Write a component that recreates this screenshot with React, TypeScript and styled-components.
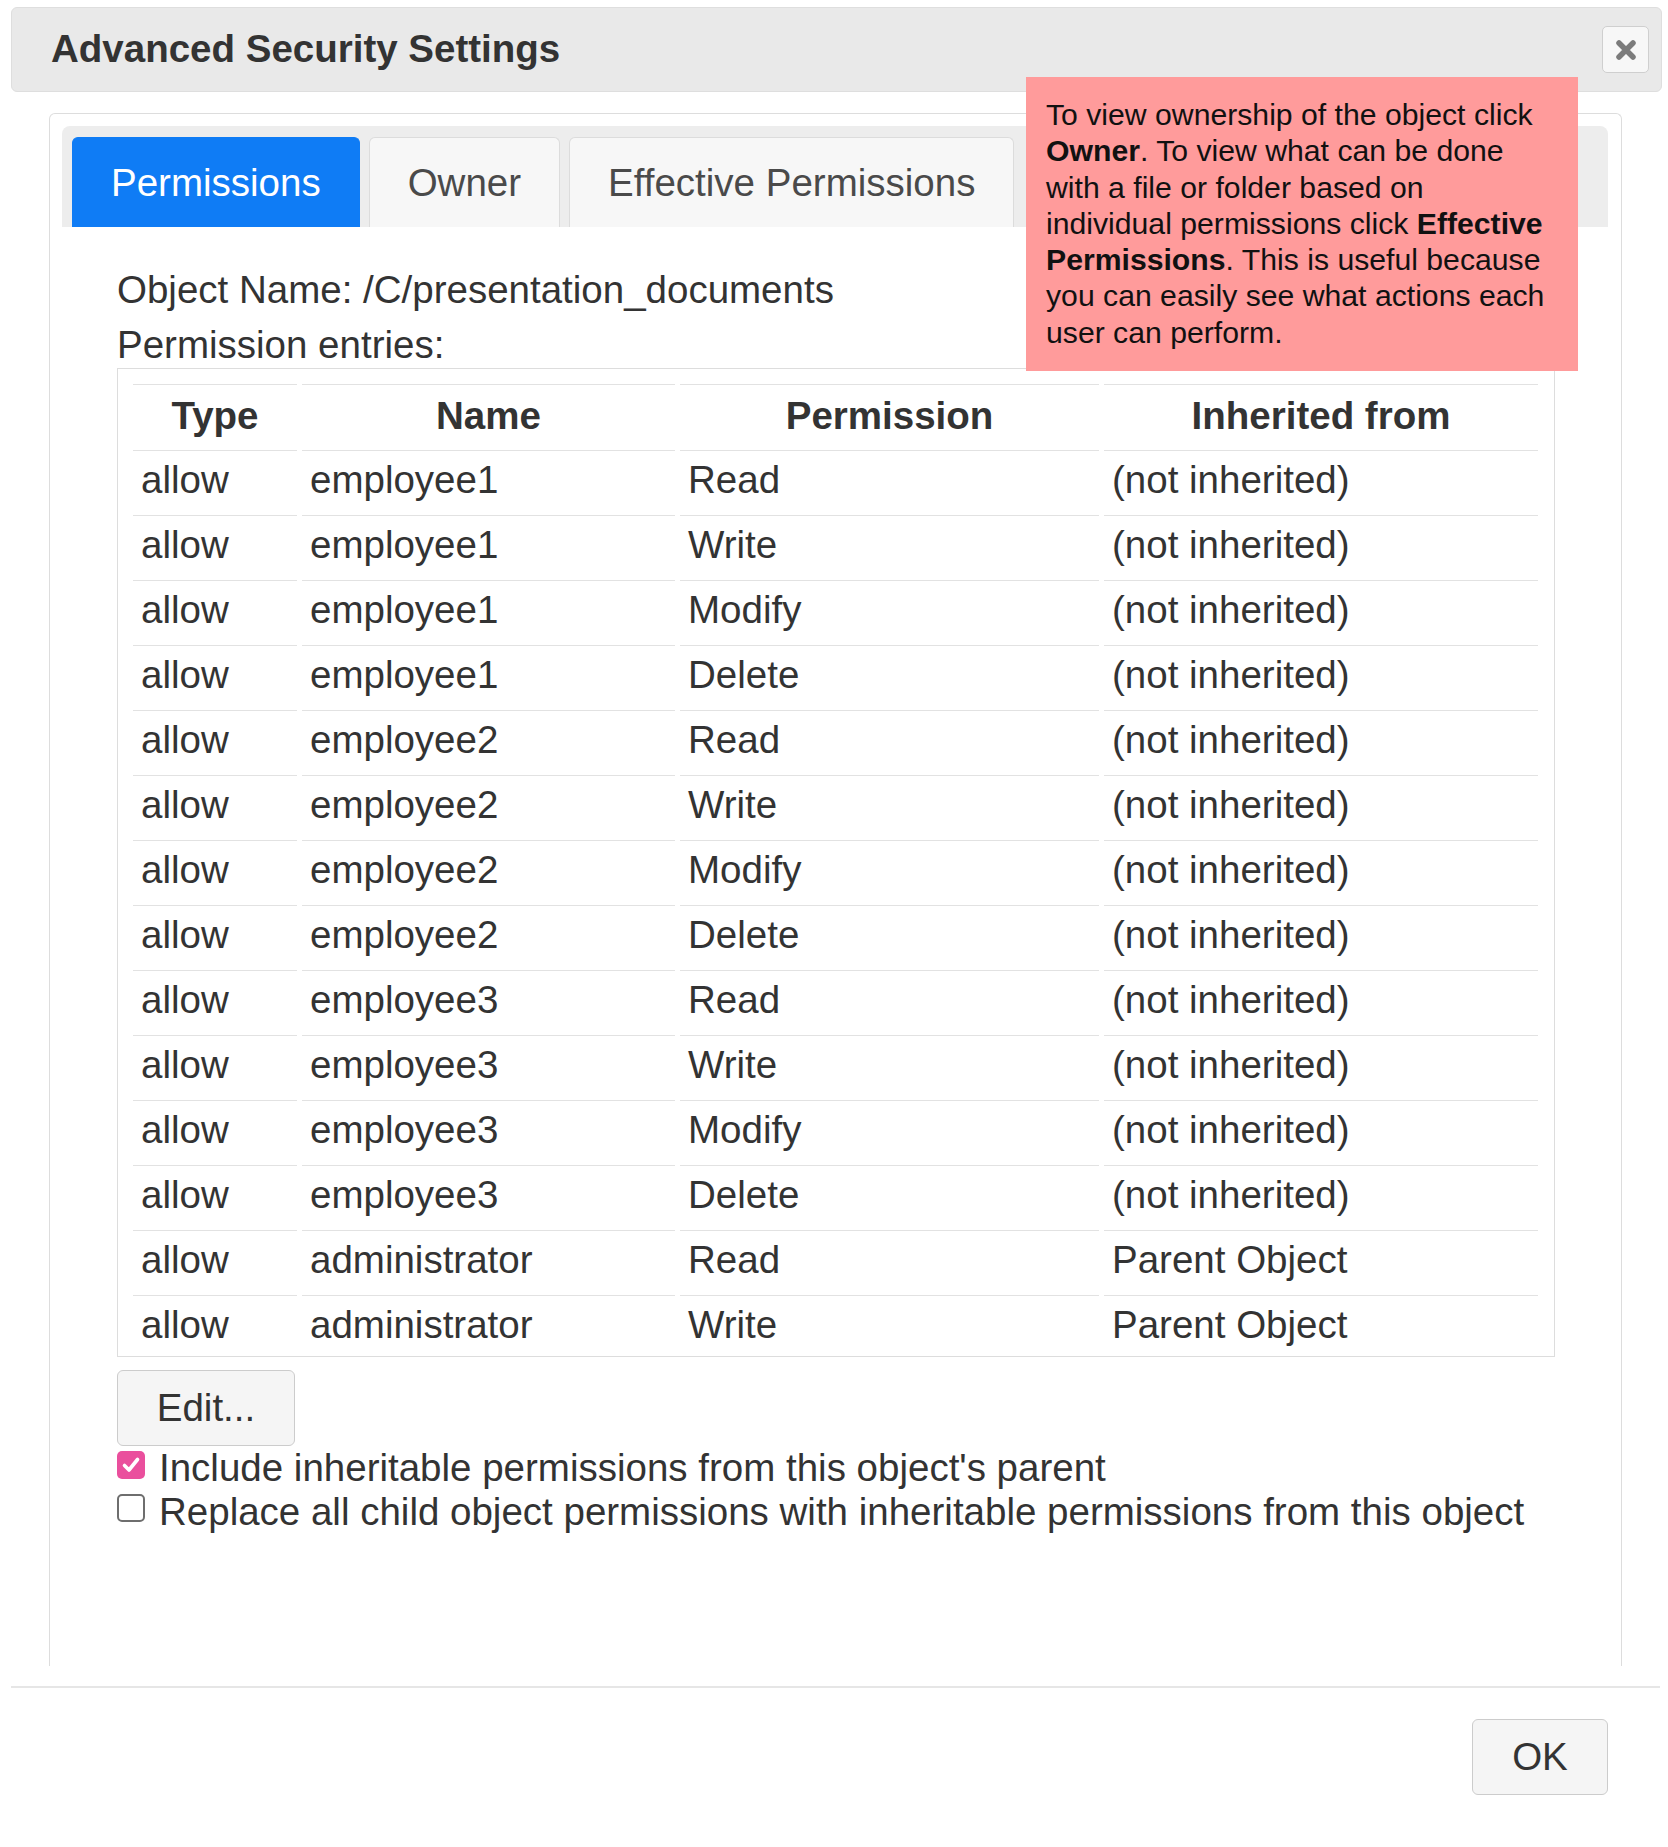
import React from "react";
import styled, { createGlobalStyle } from "styled-components";

const GlobalStyle = createGlobalStyle`
  html, body { margin: 0; padding: 0; background: #ffffff; }
  body { font-family: "Liberation Sans", Arial, Helvetica, sans-serif; color: #333; }
  * { box-sizing: border-box; }
`;

const Page = styled.div`
  position: relative;
  width: 1668px;
  min-height: 1847px;
  padding: 7px 6px 0 11px;
  font-family: "Liberation Sans", Arial, Helvetica, sans-serif;
`;

const Header = styled.div`
  height: 85px;
  display: flex;
  align-items: center;
  justify-content: space-between;
  padding: 0 12px 0 39px;
  background: #e9e9e9;
  border: 1px solid #dedede;
  border-radius: 6px;
`;

const Title = styled.h1`
  margin: 0;
  font-size: 38.5px;
  font-weight: 700;
  color: #333;
  line-height: 1;
`;

const CloseButton = styled.button`
  width: 47px;
  height: 47px;
  padding: 0;
  display: flex;
  align-items: center;
  justify-content: center;
  background: #f7f7f7;
  border: 1px solid #cfcfcf;
  border-radius: 5px;
`;

const Panel = styled.div`
  margin: 21px 40px 0 38px;
  padding: 12px 13px 132px 12px;
  border: 1px solid #dddddd;
  border-bottom: none;
  border-radius: 6px 6px 0 0;
`;

const TabBar = styled.div`
  height: 101px;
  display: flex;
  align-items: flex-end;
  gap: 9px;
  padding: 0 10px;
  background: #ededed;
  border-radius: 8px 8px 0 0;
`;

const Tab = styled.div<{ $active?: boolean }>`
  height: 90px;
  padding: 0 38px;
  display: flex;
  align-items: center;
  font-size: 38.5px;
  color: ${(p) => (p.$active ? "#ffffff" : "#4a4a4a")};
  background: ${(p) => (p.$active ? "#0f7cf5" : "#f7f7f7")};
  border: 1px solid ${(p) => (p.$active ? "#0f7cf5" : "#dcdcdc")};
  border-bottom: none;
  border-radius: 6px 6px 0 0;
`;

const Content = styled.div`
  padding: 35px 53px 0 55px;
`;

const Line = styled.div<{ $lh: number; $mb?: number }>`
  font-size: 38.5px;
  line-height: ${(p) => p.$lh}px;
  margin-bottom: ${(p) => p.$mb ?? 0}px;
  color: #333;
  white-space: nowrap;
`;

const TableBox = styled.div`
  position: relative;
  height: 989px;
  overflow: hidden;
  padding: 15px 16px 0 15px;
  border: 1px solid #dddddd;
`;

const Table = styled.table`
  width: calc(100% + 10px);
  margin: 0 -5px;
  table-layout: fixed;
  border-collapse: separate;
  border-spacing: 5px 0;
  font-size: 38.5px;
  color: #333;
`;

const Th = styled.th`
  height: 66px;
  padding: 0 8px 4px;
  border-top: 1px solid #e2e2e2;
  font-weight: 700;
  text-align: center;
  vertical-align: middle;
`;

const Td = styled.td`
  height: 65px;
  padding: 0 8px 6px;
  border-top: 1px solid #e2e2e2;
  text-align: left;
  vertical-align: middle;
  white-space: nowrap;
`;

const Button = styled.button<{ $w: number }>`
  width: ${(p) => p.$w}px;
  height: 76px;
  padding: 0;
  font-family: "Liberation Sans", Arial, Helvetica, sans-serif;
  font-size: 38.5px;
  color: #333;
  background: #f5f5f5;
  border: 1px solid #cccccc;
  border-radius: 6px;
`;

const EditButton = styled(Button)`
  margin-top: 13px;
`;

const CheckRow = styled.label`
  display: flex;
  align-items: flex-start;
  gap: 14px;
  font-size: 38.5px;
  line-height: 44px;
  color: #333;
  white-space: nowrap;
`;

const Box = styled.span<{ $checked?: boolean }>`
  flex: none;
  width: 28px;
  height: 28px;
  margin-top: ${(p) => (p.$checked ? 5 : 4)}px;
  display: flex;
  align-items: center;
  justify-content: center;
  border-radius: 5px;
  background: ${(p) => (p.$checked ? "#ea4f9d" : "#ffffff")};
  border: ${(p) => (p.$checked ? "none" : "2px solid #6e6e6e")};
`;

const Separator = styled.div`
  margin-top: 20px;
  margin-right: 2px;
  border-top: 2px solid #e6e6e6;
`;

const Footer = styled.div`
  display: flex;
  justify-content: flex-end;
  padding: 31px 54px 0 0;
`;

const Tooltip = styled.div`
  position: absolute;
  left: 1026px;
  top: 77px;
  width: 552px;
  padding: 20px;
  background: #ff9b9b;
  color: #111;
  font-size: 30.2px;
  line-height: 36.3px;
  white-space: nowrap;
`;

const rows: [string, string, string, string][] = [
  ["allow", "employee1", "Read", "(not inherited)"],
  ["allow", "employee1", "Write", "(not inherited)"],
  ["allow", "employee1", "Modify", "(not inherited)"],
  ["allow", "employee1", "Delete", "(not inherited)"],
  ["allow", "employee2", "Read", "(not inherited)"],
  ["allow", "employee2", "Write", "(not inherited)"],
  ["allow", "employee2", "Modify", "(not inherited)"],
  ["allow", "employee2", "Delete", "(not inherited)"],
  ["allow", "employee3", "Read", "(not inherited)"],
  ["allow", "employee3", "Write", "(not inherited)"],
  ["allow", "employee3", "Modify", "(not inherited)"],
  ["allow", "employee3", "Delete", "(not inherited)"],
  ["allow", "administrator", "Read", "Parent Object"],
  ["allow", "administrator", "Write", "Parent Object"],
];

const CloseIcon = () => (
  <svg width="24" height="24" viewBox="0 0 24 24" aria-hidden="true">
    <path d="M5 5 L19 19 M19 5 L5 19" stroke="#7b7b7b" strokeWidth="5.5" strokeLinecap="round" fill="none" />
  </svg>
);

const CheckMark = () => (
  <svg width="22" height="22" viewBox="0 0 22 22" aria-hidden="true">
    <path d="M4.5 11.5 L9 16 L17.5 5.5" stroke="#ffffff" strokeWidth="3.6" strokeLinecap="round" strokeLinejoin="round" fill="none" />
  </svg>
);

export default function App() {
  return (
    <>
      <GlobalStyle />
      <Page>
        <Header>
          <Title>Advanced Security Settings</Title>
          <CloseButton aria-label="Close">
            <CloseIcon />
          </CloseButton>
        </Header>

        <Panel>
          <TabBar>
            <Tab $active>Permissions</Tab>
            <Tab>Owner</Tab>
            <Tab>Effective Permissions</Tab>
          </TabBar>

          <Content>
            <Line $lh={55}>Object Name: /C/presentation_documents</Line>
            <Line $lh={55} $mb={-4}>Permission entries:</Line>
            <TableBox>
              <Table>
                <colgroup>
                  <col style={{ width: 164 }} />
                  <col style={{ width: 373 }} />
                  <col style={{ width: 419 }} />
                  <col style={{ width: 434 }} />
                </colgroup>
                <thead>
                  <tr>
                    <Th>Type</Th>
                    <Th>Name</Th>
                    <Th>Permission</Th>
                    <Th>Inherited from</Th>
                  </tr>
                </thead>
                <tbody>
                  {rows.map((r, i) => (
                    <tr key={i}>
                      {r.map((c, j) => (
                        <Td key={j}>{c}</Td>
                      ))}
                    </tr>
                  ))}
                </tbody>
              </Table>
            </TableBox>
            <EditButton $w={178}>Edit...</EditButton>
            <CheckRow>
              <Box $checked>
                <CheckMark />
              </Box>
              Include inheritable permissions from this object's parent
            </CheckRow>
            <CheckRow>
              <Box />
              Replace all child object permissions with inheritable permissions from this object
            </CheckRow>
          </Content>
        </Panel>

        <Separator />
        <Footer>
          <Button $w={136}>OK</Button>
        </Footer>

        <Tooltip>
          To view ownership of the object click
          <br />
          <b>Owner</b>. To view what can be done
          <br />
          with a file or folder based on
          <br />
          individual permissions click <b>Effective</b>
          <br />
          <b>Permissions</b>. This is useful because
          <br />
          you can easily see what actions each
          <br />
          user can perform.
        </Tooltip>
      </Page>
    </>
  );
}
